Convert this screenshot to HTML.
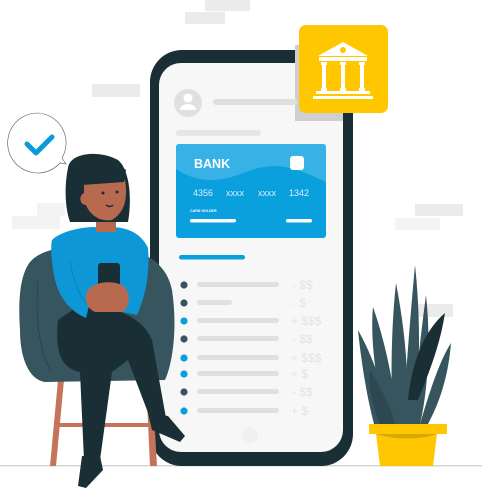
<!DOCTYPE html>
<html><head><style>
html,body{margin:0;padding:0;background:#fff;}
svg{display:block}
text{font-family:"Liberation Sans",sans-serif}
</style></head><body>
<svg width="482" height="490" viewBox="0 0 482 490" xmlns="http://www.w3.org/2000/svg">
<g fill="#ebebeb">
<rect x="205" y="0" width="45" height="11"/>
<rect x="185" y="12" width="40" height="12"/>
<rect x="92" y="84" width="48" height="13"/>
<rect x="37" y="203" width="28" height="13" fill="#f3f3f3"/>
<rect x="12" y="216" width="48" height="13" fill="#f3f3f3"/>
<rect x="415" y="204" width="48" height="12"/>
<rect x="395" y="218" width="45" height="12" fill="#f3f3f3"/>
<rect x="413" y="304" width="40" height="13"/>
</g>
<rect x="0" y="465" width="482" height="1.5" fill="#d6d6d6"/>
<path d="M38 113 a30 30 0 1 0 22 50 l6 1 l-4 -6 a30 30 0 0 0 -24 -45z" fill="#fff" stroke="#555" stroke-width="0.6"/>
<path d="M27 144 l9 9 l16 -16" fill="none" stroke="#0a9ad9" stroke-width="5" stroke-linecap="round" stroke-linejoin="round"/>
<rect x="150" y="50" width="203" height="416" rx="32" fill="#1a2e35"/>
<rect x="159" y="63" width="184" height="389" rx="22" fill="#f7f7f7"/>
<rect x="295" y="45" width="48" height="76" fill="#cfcfcf"/>
<rect x="299" y="25" width="89" height="88" rx="7" fill="#ffc700"/>
<g fill="#fff">
<path d="M318 56 L343 42 L368 56 Z"/>
<circle cx="343" cy="50" r="3" fill="#ffc700"/>
<rect x="319" y="57" width="48" height="4"/>
<rect x="321" y="62" width="6" height="3"/><rect x="322" y="64" width="4" height="25"/><rect x="321" y="88" width="6" height="3"/>
<rect x="340" y="62" width="6" height="3"/><rect x="341" y="64" width="4" height="25"/><rect x="340" y="88" width="6" height="3"/>
<rect x="359" y="62" width="6" height="3"/><rect x="360" y="64" width="4" height="25"/><rect x="359" y="88" width="6" height="3"/>
<rect x="316" y="91" width="54" height="3"/>
<rect x="313" y="96" width="60" height="3"/>
</g>
<circle cx="188" cy="103" r="14" fill="#e0e0e0"/>
<circle cx="188" cy="98" r="4.5" fill="#fff"/>
<path d="M180 110 a8 6 0 0 1 16 0z" fill="#fff"/>
<rect x="213" y="99" width="84" height="6" rx="3" fill="#e0e0e0"/>
<rect x="176" y="130" width="85" height="6" rx="3" fill="#e6e6e6"/>
<rect x="176" y="144" width="150" height="94" rx="3" fill="#0aa0de"/>
<path d="M176 147 a3 3 0 0 1 3 -3 h144 a3 3 0 0 1 3 3 v35 c-30 -14 -50 -22 -80 -10 c-30 12 -50 10 -70 -3z" fill="#38b2e6"/>
<text x="194" y="168" font-size="12.5" font-weight="bold" fill="#fff">BANK</text>
<rect x="290" y="156" width="14" height="14" rx="3" fill="#fff"/>
<g font-size="9" fill="#d9f0fa">
<text x="193" y="196">4356</text><text x="226" y="196">xxxx</text><text x="258" y="196">xxxx</text><text x="289" y="196">1342</text>
</g>
<text x="190" y="212" font-size="3.6" font-weight="bold" fill="#fff">CARD HOLDER</text>
<rect x="190" y="219" width="46" height="3.5" rx="1.7" fill="#fff"/>
<rect x="286" y="219" width="26" height="3.5" rx="1.7" fill="#fff"/>
<rect x="179" y="255" width="66" height="4.5" rx="2.2" fill="#0aa0de"/>
<g fill="#e0e0e0">
<rect x="197" y="282" width="82" height="5" rx="2.5"/>
<rect x="197" y="300" width="35" height="5" rx="2.5"/>
<rect x="197" y="318" width="82" height="5" rx="2.5"/>
<rect x="197" y="336" width="82" height="5" rx="2.5"/>
<rect x="197" y="355" width="82" height="5" rx="2.5"/>
<rect x="197" y="371" width="82" height="5" rx="2.5"/>
<rect x="197" y="389" width="82" height="5" rx="2.5"/>
<rect x="197" y="408" width="82" height="5" rx="2.5"/>
</g>
<g>
<circle cx="184" cy="285" r="3.6" fill="#37555e"/>
<circle cx="184" cy="303" r="3.6" fill="#37555e"/>
<circle cx="184" cy="321" r="3.6" fill="#0aa0de"/>
<circle cx="184" cy="339" r="3.6" fill="#37555e"/>
<circle cx="184" cy="358" r="3.6" fill="#0aa0de"/>
<circle cx="184" cy="374" r="3.6" fill="#0aa0de"/>
<circle cx="184" cy="392" r="3.6" fill="#37555e"/>
<circle cx="184" cy="411" r="3.6" fill="#0aa0de"/>
</g>
<g font-size="12" fill="#e3e3e3">
<text x="292" y="289">- $$</text>
<text x="292" y="307">- $</text>
<text x="291" y="325">+ $$$</text>
<text x="292" y="343">- $$</text>
<text x="291" y="362">+ $$$</text>
<text x="291" y="378">+ $</text>
<text x="292" y="396">- $$</text>
<text x="291" y="415">+ $</text>
</g>
<circle cx="250" cy="435" r="8" fill="#f0f0f0"/>
<g fill="#37555e">
<path d="M374 424 C365 390 360 350 358 330 C375 360 385 395 392 424Z"/>
<path d="M385 424 C376 380 370 340 373 307 C388 350 395 395 398 424Z"/>
<path d="M393 424 C390 370 392 320 396 283 C405 330 410 380 406 424Z"/>
<path d="M403 424 C406 370 410 320 415 265 C421 320 420 380 414 424Z"/>
<path d="M412 424 C416 380 420 340 426 295 C431 340 428 390 420 424Z"/>
<path d="M420 424 C430 390 440 360 451 343 C448 380 438 405 428 424Z"/>
<path d="M408 400 C412 360 425 330 445 313 C440 345 430 370 418 400Z" fill="#1a2e35"/>
<path d="M380 424 C370 400 368 380 370 370 C382 390 390 405 395 424Z" fill="#2d4850"/>
</g>
<rect x="369" y="424" width="78" height="10" fill="#ffc700"/>
<path d="M376 434 H437 L433 466 H380Z" fill="#ffc700"/>
<path d="M376 434 H437 C420 440 395 440 376 434Z" fill="#d9a800"/>
<!-- chair -->
<path d="M50 466 L58 380 L64 380 L56 466Z" fill="#c6735c"/>
<path d="M150 466 L146 380 L152 380 L157 466Z" fill="#c6735c"/>
<rect x="55" y="423" width="98" height="4" fill="#c6735c"/>
<path d="M30 262 C45 245 80 245 100 250 C130 245 165 255 172 290 C178 330 172 365 165 380 L45 382 C30 380 20 360 20 330 C18 300 20 275 30 262Z" fill="#37555e"/>
<path d="M38 280 C35 320 40 350 50 370" fill="none" stroke="#26403f" stroke-width="0.7"/>
<!-- body / pants -->
<path d="M58 320 C55 350 60 368 80 372 L84 460 L100 460 L112 372 L128 360 L150 418 L166 418 L152 340 C142 315 110 305 80 305Z" fill="#1a2e35"/>
<path d="M82 456 L100 456 L103 470 L86 488 L78 486Z" fill="#1a2e35"/>
<path d="M148 413 L168 416 L185 436 L180 442 L152 430Z" fill="#1a2e35"/>
<!-- sweater -->
<path d="M52 240 C62 230 90 225 102 228 C120 225 140 230 148 248 C150 272 146 295 137 315 L122 312 L120 290 L92 294 L86 318 C72 312 60 300 55 280 C52 265 50 250 52 240Z" fill="#0d97d6"/>
<path d="M70 262 C75 285 80 300 92 308" fill="none" stroke="#0b7fb5" stroke-width="0.8"/>
<!-- neck & head -->
<rect x="96" y="214" width="20" height="18" fill="#b86a4f"/>
<path d="M68 168 C70 152 100 150 118 160 C130 170 132 200 128 222 L70 222 C64 205 65 182 68 168Z" fill="#1a2e35"/>
<path d="M84 180 C95 178 115 175 125 180 C128 198 125 212 112 220 C100 222 90 215 86 205 C80 205 78 196 84 193Z" fill="#b86a4f"/>
<path d="M82 168 C95 162 115 160 126 170 L124 182 L82 185Z" fill="#1a2e35"/>
<circle cx="103" cy="193" r="1.5" fill="#1a2e35"/>
<circle cx="117" cy="192" r="1.5" fill="#1a2e35"/>
<path d="M106 205 q4 3 7 0" fill="none" stroke="#1a2e35" stroke-width="1.5"/>
<rect x="98" y="263" width="22" height="28" rx="3" fill="#1a2e35"/>
<path d="M88 290 C95 282 110 280 122 285 C132 292 130 308 122 312 L95 312 C85 308 84 296 88 290Z" fill="#b86a4f"/>
</svg>
</body></html>
